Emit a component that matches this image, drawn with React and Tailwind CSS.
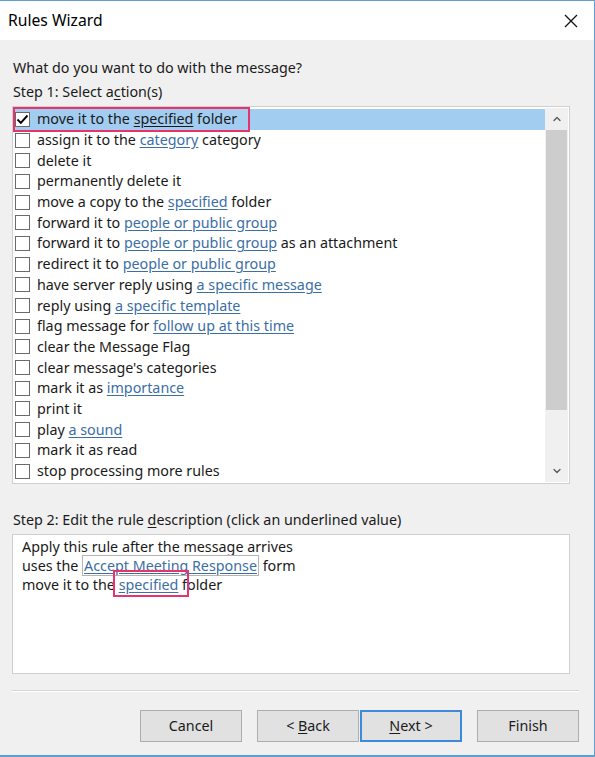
import { ChevronUp, ChevronDown } from 'lucide-react';

const Link = ({ children }) => (
  <span className="text-[#3b6ea5] underline underline-offset-2 decoration-[#3b6ea5]">{children}</span>
);

const actions = [
  ['move it to the ', <span key="u" className="underline underline-offset-2">specified</span>, ' folder'],
  ['assign it to the ', <Link key="l">category</Link>, ' category'],
  ['delete it'],
  ['permanently delete it'],
  ['move a copy to the ', <Link key="l">specified</Link>, ' folder'],
  ['forward it to ', <Link key="l">people or public group</Link>],
  ['forward it to ', <Link key="l">people or public group</Link>, ' as an attachment'],
  ['redirect it to ', <Link key="l">people or public group</Link>],
  ['have server reply using ', <Link key="l">a specific message</Link>],
  ['reply using ', <Link key="l">a specific template</Link>],
  ['flag message for ', <Link key="l">follow up at this time</Link>],
  ['clear the Message Flag'],
  ["clear message's categories"],
  ['mark it as ', <Link key="l">importance</Link>],
  ['print it'],
  ['play ', <Link key="l">a sound</Link>],
  ['mark it as read'],
  ['stop processing more rules'],
];

const CheckBox = ({ checked }) => (
  <div className="w-[15px] h-[15px] border border-[#6a6a6a] bg-white flex items-center justify-center shrink-0">
    {checked && (
      <svg width="13" height="13" viewBox="0 0 13 13">
        <path d="M1.5 6.5 L4.8 9.8 L11.5 2.5" fill="none" stroke="#000" strokeWidth="1.9" />
      </svg>
    )}
  </div>
);

const Button = ({ children, primary, className = '' }) => (
  <button
    className={`w-[102px] h-[32px] bg-[#e1e1e1] text-[14.3px] text-[#1a1a1a] ${
      primary ? 'border-2 border-[#3c8ad8]' : 'border border-[#adadad]'
    } ${className}`}
  >
    {children}
  </button>
);

export default function App() {
  return (
    <div
      className="w-[595px] h-[757px] bg-[#f0f0f0] border-t border-r border-b-2 border-[#5e9fd4] flex flex-col text-[14.3px] text-[#1a1a1a]"
      style={{ fontFamily: '"Noto Sans", "Open Sans", sans-serif' }}
    >
      {/* barra de título */}
      <div className="h-[39px] bg-white flex items-center justify-between pl-[8px] pr-[16px]">
        <span className="text-[15.7px] text-black">Rules Wizard</span>
        <svg width="14" height="14" viewBox="0 0 14 14">
          <path d="M1 1 L13 13 M13 1 L1 13" stroke="#111" strokeWidth="1.3" />
        </svg>
      </div>

      <div className="flex flex-col pl-[12px] pr-[15px]">
        <div className="mt-[18px] leading-[20px] pl-px">What do you want to do with the message?</div>
        <div className="mt-[4px] leading-[20px] pl-px">
          Step 1: Select a<span className="underline underline-offset-2">c</span>tion(s)
        </div>

        {/* lista de acciones */}
        <div className="mt-[4px] w-[558px] h-[378px] bg-white border border-[#cfcfcf] flex p-px">
          <div className="flex-1 flex flex-col pt-px">
            {actions.map((parts, i) => (
              <div
                key={i}
                className={`h-[20.7px] flex items-center gap-[7px] pl-[1px] ${i === 0 ? 'bg-[#a2cdf1] relative' : ''}`}
              >
                <CheckBox checked={i === 0} />
                <span className="leading-[20px] whitespace-nowrap">{parts}</span>
                {i === 0 && (
                  <div className="absolute left-[-1px] top-[-2px] w-[237px] h-[25px] border-2 border-[#e8336d]" />
                )}
              </div>
            ))}
          </div>
          {/* barra de desplazamiento */}
          <div className="w-[23px] bg-[#f0f0f0] flex flex-col">
            <div className="h-[22px] flex items-center justify-center">
              <ChevronUp size={12} strokeWidth={2.5} color="#555" />
            </div>
            <div className="h-[280px] mx-px bg-[#cdcdcd]" />
            <div className="flex-1" />
            <div className="h-[22px] flex items-center justify-center">
              <ChevronDown size={12} strokeWidth={2.5} color="#555" />
            </div>
          </div>
        </div>

        <div className="mt-[26px] leading-[20px] pl-px">
          Step 2: Edit the rule <span className="underline underline-offset-2">d</span>escription (click an underlined value)
        </div>

        {/* descripción */}
        <div className="mt-[4px] w-[558px] h-[140px] bg-white border border-[#cfcfcf] pl-[9px] pt-[2px]">
          <div className="h-[19px] flex items-center">Apply this rule after the message arrives</div>
          <div className="h-[19px] flex items-center">
            <span>uses the&nbsp;</span>
            <span className="h-[21px] flex items-center border border-[#b4b4b4] px-[1px]">
              <Link>Accept Meeting Response</Link>
            </span>
            <span>&nbsp;form</span>
          </div>
          <div className="h-[19px] flex items-center">
            <span>move it to the&nbsp;</span>
            <span className="relative">
              <Link>specified</Link>
              <span className="absolute left-[-6px] top-[-4px] w-[76px] h-[27px] border-2 border-[#e8336d]" />
            </span>
            <span>&nbsp;folder</span>
          </div>
        </div>

        <div className="mt-[16px] h-[2px] border-t border-[#d5d5d5] border-b border-b-white" />

        {/* botones */}
        <div className="mt-[18px] flex justify-end">
          <Button>Cancel</Button>
          <Button className="ml-[15px]">
            &lt; <span className="underline underline-offset-2">B</span>ack
          </Button>
          <Button primary className="ml-px">
            <span className="underline underline-offset-2">N</span>ext &gt;
          </Button>
          <Button className="ml-[15px]">Finish</Button>
        </div>
      </div>
    </div>
  );
}
